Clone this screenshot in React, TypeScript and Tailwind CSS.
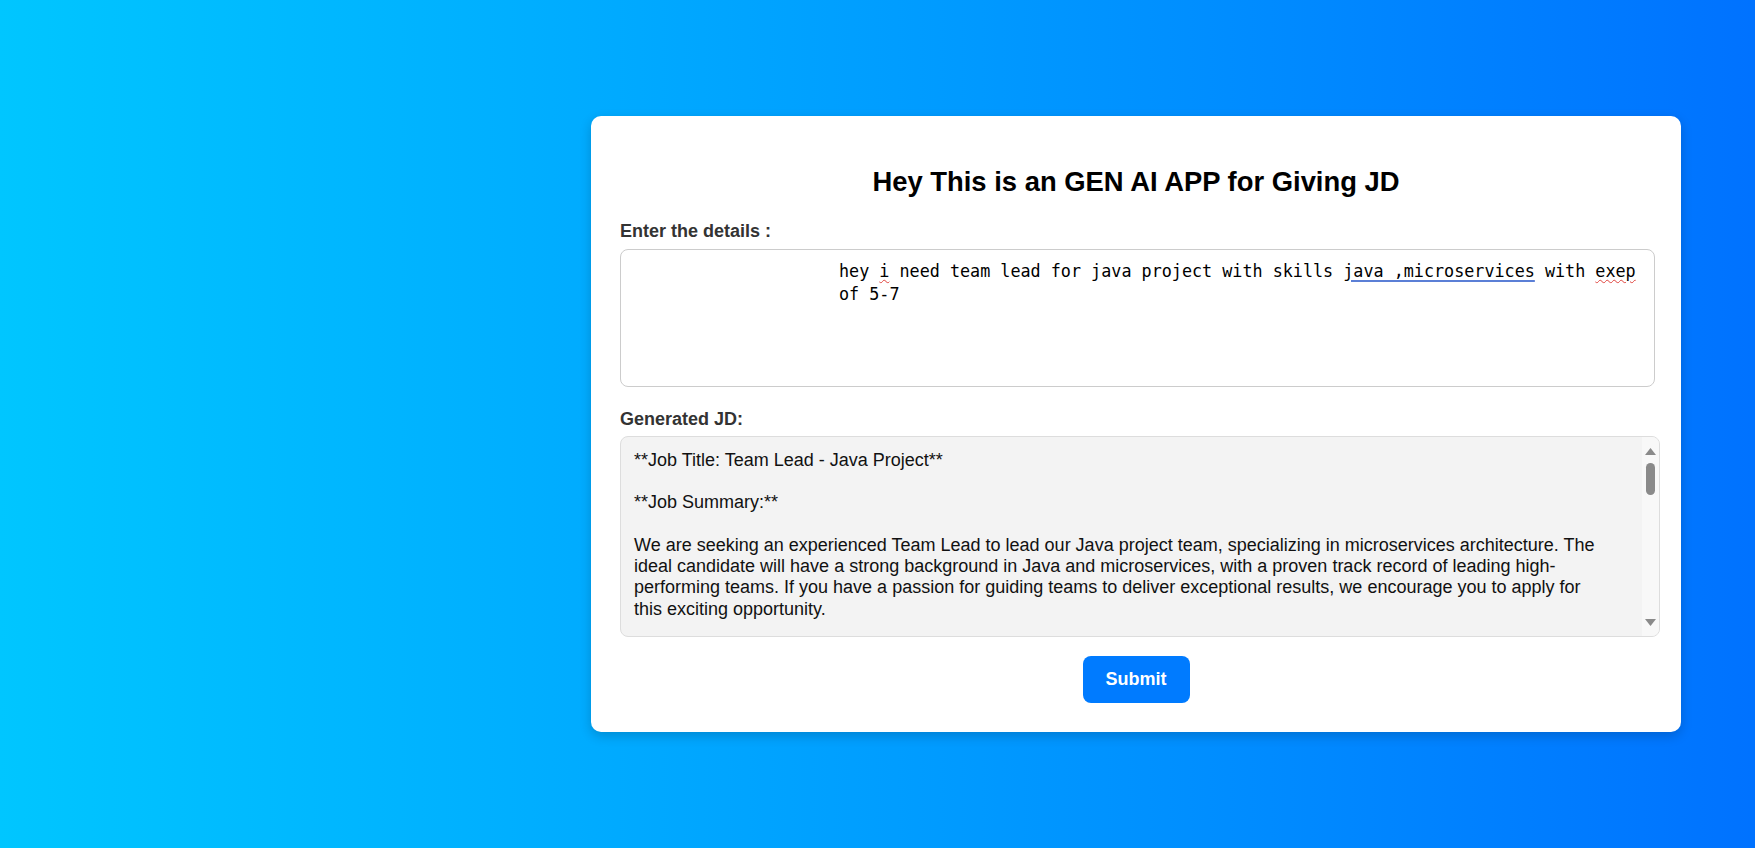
import React from "react";

const jdLines = [
  "**Job Title: Team Lead - Java Project**",
  "",
  "**Job Summary:**",
  "",
  "We are seeking an experienced Team Lead to lead our Java project team, specializing in microservices architecture. The",
  "ideal candidate will have a strong background in Java and microservices, with a proven track record of leading high-",
  "performing teams. If you have a passion for guiding teams to deliver exceptional results, we encourage you to apply for",
  "this exciting opportunity.",
  "",
  "**Key Responsibilities:**",
  "",
  "* Lead and mentor a team of Java developers working on microservices-based applications",
];

const App = () => {
  return (
    <div className="w-full h-screen flex items-center justify-end pr-[74px] bg-gradient-to-r from-[#00c6ff] to-[#0072ff] font-['Liberation_Sans',Arial,sans-serif]">
      <div className="w-[1090px] h-[616px] bg-white rounded-[10px] shadow-[0_4px_12px_rgba(0,0,0,0.18)] px-[29px] pt-[50px] flex flex-col">
        <h1 className="text-center text-[27.4px] leading-[31.5px] font-bold text-black">
          Hey This is an GEN AI APP for Giving JD
        </h1>

        <label className="mt-[23px] text-[18px] leading-[21px] font-bold text-[#333]">
          Enter the details :
        </label>
        <div className="mt-[7px] w-[1035px] h-[138px] border border-[#ccc] rounded-[8px] pl-[218px] pt-[10px] pr-[8px] whitespace-pre-wrap font-['DejaVu_Sans_Mono',monospace] text-[16.75px] leading-[23px] text-black">
          {"hey "}
          <span className="underline decoration-wavy decoration-[#e0443e] decoration-1 underline-offset-[2px]">i</span>
          {" need team lead for java project with skills "}
          <span className="underline decoration-[#5b7fd6] decoration-[1.5px] underline-offset-[3px]">java ,microservices</span>
          {" with "}
          <span className="underline decoration-wavy decoration-[#e0443e] decoration-1 underline-offset-[2px]">exep</span>
          {"\nof 5-7"}
        </div>

        <label className="mt-[22px] text-[18px] leading-[21px] font-bold text-[#333]">
          Generated JD:
        </label>
        <div className="mt-[6px] w-[1040px] h-[201px] border border-[#ddd] rounded-[8px] bg-[#f3f3f3] flex overflow-hidden">
          <div className="flex-1 overflow-hidden pl-[13px] pt-[13px] pr-[10px] text-[18px] leading-[21.3px] text-[#111] whitespace-pre-wrap">
            {jdLines.join("\n")}
          </div>
          <div className="w-[17px] bg-[#f8f8f8] flex flex-col items-center pt-[11px] pb-[10px]">
            <svg width="11" height="7" viewBox="0 0 11 7" className="shrink-0">
              <path d="M5.5 0 L11 7 L0 7 Z" fill="#8a8a8a" />
            </svg>
            <div className="mt-[8px] w-[9px] h-[32px] rounded-full bg-[#8a8a8a]" />
            <div className="flex-1" />
            <svg width="11" height="7" viewBox="0 0 11 7" className="shrink-0">
              <path d="M0 0 L11 0 L5.5 7 Z" fill="#8a8a8a" />
            </svg>
          </div>
        </div>

        <button className="mt-[19px] self-center h-[47px] px-[23px] rounded-[8px] bg-[#007bff] text-white text-[18px] font-bold">
          Submit
        </button>
      </div>
    </div>
  );
};

export default App;
